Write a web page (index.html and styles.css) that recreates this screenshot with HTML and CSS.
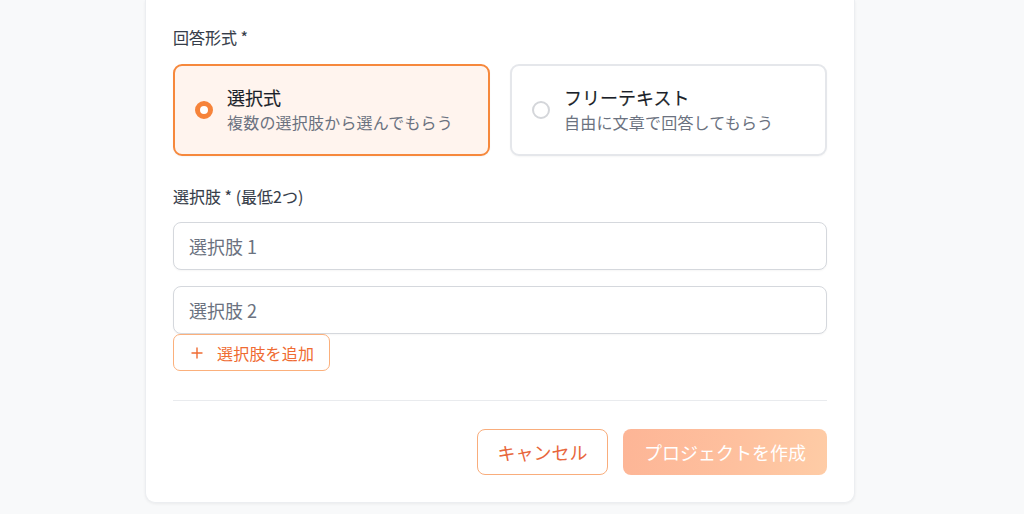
FILE: index.html
```html
<!DOCTYPE html>
<html lang="ja">
<head>
<meta charset="utf-8">
<title>プロジェクト作成</title>
<link rel="stylesheet" href="styles.css">
</head>
<body>
<main class="page">
  <section class="card">
    <div class="field">
      <div class="label">回答形式 *</div>
      <div class="options">
        <label class="option selected">
          <span class="radio"></span>
          <span class="option-text">
            <span class="option-title">選択式</span>
            <span class="option-sub">複数の選択肢から選んでもらう</span>
          </span>
        </label>
        <label class="option">
          <span class="radio"></span>
          <span class="option-text">
            <span class="option-title">フリーテキスト</span>
            <span class="option-sub">自由に文章で回答してもらう</span>
          </span>
        </label>
      </div>
    </div>
    <div class="field field-choices">
      <div class="label label-choices">選択肢 * (最低2つ)</div>
      <div class="inputs">
        <input class="input" type="text" placeholder="選択肢 1">
        <input class="input" type="text" placeholder="選択肢 2">
      </div>
      <button class="add-btn" type="button">
        <svg class="plus" viewBox="0 0 12 12" width="12" height="12"><path d="M6 1v10M1 6h10" stroke="currentColor" stroke-width="1.4" stroke-linecap="round" fill="none"/></svg>
        <span>選択肢を追加</span>
      </button>
    </div>
    <div class="footer">
      <button class="btn btn-cancel" type="button">キャンセル</button>
      <button class="btn btn-create" type="button">プロジェクトを作成</button>
    </div>
  </section>
</main>
</body>
</html>
```

FILE: styles.css
```css
* { box-sizing: border-box; }
html, body {
  margin: 0;
  padding: 0;
  height: 514px;
  overflow: hidden;
  background: #f8f9fa;
  font-family: "Noto Sans CJK JP", "Noto Sans", "Liberation Sans", sans-serif;
  color: #1f2937;
}
.page {
  padding-left: 145px;
}
.card {
  width: 710px;
  background: #ffffff;
  border: 1px solid #eceef1;
  border-top: none;
  border-radius: 0 0 10px 10px;
  box-shadow: 0 1px 3px rgba(0,0,0,0.06);
  padding: 25px 27px 27px 27px;
}
.label {
  font-size: 16px;
  line-height: 24px;
  font-weight: 400;
  color: #363d49;
  margin-bottom: 15px;
  -webkit-text-stroke: 0.1px #363d49;
}
.options {
  display: grid;
  grid-template-columns: 1fr 1fr;
  gap: 20px;
}
.option {
  display: flex;
  align-items: center;
  gap: 14px;
  height: 92px;
  padding: 0 20px;
  border: 2px solid #e5e7eb;
  border-radius: 9px;
  background: #fff;
  box-shadow: 0 1px 2px rgba(0,0,0,0.04);
}
.option.selected {
  border-color: #f6883c;
  background: #fff4ee;
}
.radio {
  flex: none;
  width: 18px;
  height: 18px;
  border-radius: 50%;
  border: 2px solid #d4d6da;
  background: #fff;
}
.option.selected .radio {
  border: 5px solid #f6833a;
}
.option-text {
  display: flex;
  flex-direction: column;
  margin-top: -2px;
}
.option-title {
  font-size: 18px;
  line-height: 26px;
  font-weight: 400;
  color: #1a1f29;
  -webkit-text-stroke: 0.15px #1a1f29;
}
.option-sub {
  font-size: 16px;
  line-height: 24px;
  color: #6b7280;
  letter-spacing: 0.2px;
}
.field-choices {
  margin-top: 28px;
}
.label-choices {
  margin-bottom: 14px;
}
.inputs {
  display: flex;
  flex-direction: column;
  gap: 16px;
}
.input {
  display: block;
  width: 100%;
  height: 48px;
  border: 1px solid #d5d8dd;
  border-radius: 8px;
  padding: 0 15px;
  font-family: inherit;
  font-size: 18px;
  color: #1f2937;
  background: #fff;
  box-shadow: 0 1px 2px rgba(0,0,0,0.04);
  outline: none;
}
.input::placeholder {
  color: #6b7280;
}
.add-btn {
  display: inline-flex;
  align-items: center;
  gap: 14px;
  height: 37px;
  margin-top: 0;
  padding: 0 15px 0 17px;
  border: 1px solid #fbb07c;
  border-radius: 7px;
  background: #fff;
  color: #ef6b32;
  font-family: inherit;
  font-size: 16px;
  line-height: 1;
  letter-spacing: 0.2px;
}
.plus {
  display: block;
}
.footer {
  margin-top: 29px;
  border-top: 1px solid #e9ebee;
  padding-top: 28px;
  display: flex;
  justify-content: flex-end;
  gap: 15px;
}
.btn {
  height: 46px;
  border-radius: 8px;
  font-family: inherit;
  font-size: 18px;
  line-height: 1;
}
.btn-cancel {
  width: 131px;
  border: 1px solid #f9ad7c;
  background: #fff;
  color: #e8673c;
}
.btn-create {
  width: 204px;
  border: none;
  background: linear-gradient(100deg, #fdb596 0%, #fec09e 55%, #fecca6 100%);
  color: #ffffff;
}
```
